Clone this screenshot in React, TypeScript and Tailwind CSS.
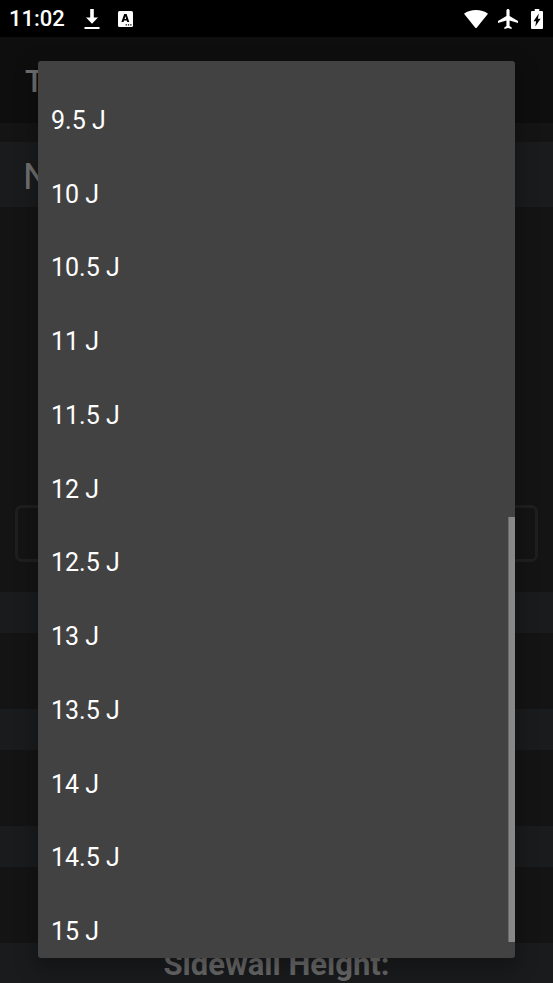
const widths = [
  "9.5 J",
  "10 J",
  "10.5 J",
  "11 J",
  "11.5 J",
  "12 J",
  "12.5 J",
  "13 J",
  "13.5 J",
  "14 J",
  "14.5 J",
  "15 J",
]

const sections = ["", "", "", "Sidewall Height:"]

function StatusBar() {
  return (
    <header className="flex h-[37px] shrink-0 items-center justify-between bg-black pl-[9px] pr-[10px] text-white">
      <div className="flex items-center">
        <span className="w-[75px] text-[22px] leading-[37px] font-medium">11:02</span>
        <svg className="h-[22px] w-4" viewBox="0 0 16 22" fill="currentColor">
          <path d="M6.200 1h3.600v8.500H14L8 15.700 2 9.500h4.200zM.5 18.900h15v2H.5z" />
        </svg>
        <svg className="ml-[18px] h-4 w-[15px]" viewBox="0 0 15 16">
          <rect width="15" height="16" rx="1.5" fill="#fff" />
          <path
            d="M6.200 3h2.400l2.700 8H9.200l-.5-1.500H6L5.500 11H3.400zM7.400 5.200 6.500 8h1.700z"
            fill="#000"
            fillRule="evenodd"
          />
          <path d="M7.600 13.200h1.300v1.300H7.600zM9.900 13.200h1.300v1.300H9.900zM12.200 13.200h1.300v1.300h-1.300z" fill="#000" />
        </svg>
      </div>
      <div className="flex items-center">
        <svg className="h-[18px] w-6" viewBox="0 0 24 18" fill="currentColor">
          <path d="M0 3.700C3.200 1.200 7.400 0 12 0s8.800 1.200 12 3.700L12.700 17.700q-.7.700-1.400 0z" />
        </svg>
        <svg className="ml-[10px] h-5 w-5" viewBox="2 2 19 20" preserveAspectRatio="none" fill="currentColor">
          <path d="M21 16v-2l-8-5V3.500c0-.830-.670-1.500-1.500-1.500S10 2.670 10 3.500V9l-8 5v2l8-2.500V19l-2 1.500V22l3.500-1 3.500 1v-1.500L13 19v-5.500z" />
        </svg>
        <svg className="ml-[13px] h-5 w-3" viewBox="0 0 12 20">
          <path
            d="M3.700 0h4.600v2H11q1 0 1 1v16q0 1-1 1H1q-1 0-1-1V3q0-1 1-1h2.700z"
            fill="#fff"
          />
          <path d="M7.800 4.500 2.500 12.200h2.600L4.300 17.500 9.600 9.700H6.900z" fill="#000" />
        </svg>
      </div>
    </header>
  )
}

function WidthMenu() {
  return (
    <div className="absolute inset-x-[38px] top-[61px] bottom-[25px] overflow-hidden rounded-[3px] bg-[#424242] shadow-[0_8px_20px_4px_rgba(0,0,0,0.25)]">
      <ul role="listbox" aria-label="Rim width" className="mt-[23px] grid h-[885px] auto-rows-fr">
        {widths.map((width) => (
          <li key={width} role="option" aria-selected={false} className="flex">
            <button className="flex-1 px-[13px] text-left text-[25px] leading-8 text-white">{width}</button>
          </li>
        ))}
      </ul>
      {/* Scroll thumb */}
      <div className="absolute right-0 bottom-4 h-[425px] w-[7px] border-l border-[#6b6b6b] bg-[#888888]" />
    </div>
  )
}

export default function App() {
  return (
    <div className="relative flex h-screen flex-col overflow-hidden bg-[#141414] font-['Roboto',sans-serif]">
      <StatusBar />
      <div className="flex h-[86px] shrink-0 items-center bg-[#0e0e0e] px-[25px] pt-1">
        <h1 className="text-[31px] leading-9 font-medium text-[#707070]">T</h1>
      </div>
      <main className="pt-[19px]">
        <div className="flex h-[65px] items-center bg-[#191b1d] px-[23px] pt-1">
          <h2 className="text-[37px] leading-[65px] text-[#707070]">N</h2>
        </div>
        <div className="px-[15px] pt-[298px] pb-[30px]">
          <button aria-label="Rim width" className="block h-[57px] w-full rounded-[7px] border-3 border-[#1f1f1f]" />
        </div>
        <div className="flex flex-col gap-[76px]">
          {sections.map((title, index) => (
            <h3
              key={index}
              className="h-[41px] bg-[#191b1d] text-center text-[31px] leading-[43px] font-bold text-[#686868]"
            >
              {title}
            </h3>
          ))}
        </div>
      </main>
      <WidthMenu />
    </div>
  )
}
